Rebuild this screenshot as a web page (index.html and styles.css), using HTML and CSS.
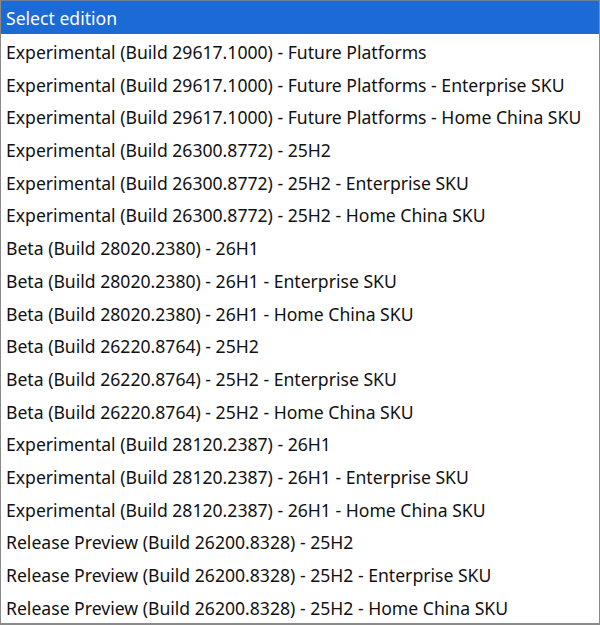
FILE: index.html
```html
<!DOCTYPE html>
<html lang="en">
<head>
    <meta charset="UTF-8">
    <meta name="viewport" content="width=device-width, initial-scale=1.0">
    <title>Select edition</title>
    <link rel="stylesheet" href="styles.css">
</head>
<body>
    <div class="dropdown">
        <div class="option selected">Select edition</div>
        <div class="option">Experimental (Build 29617.1000) - Future Platforms</div>
        <div class="option">Experimental (Build 29617.1000) - Future Platforms - Enterprise SKU</div>
        <div class="option">Experimental (Build 29617.1000) - Future Platforms - Home China SKU</div>
        <div class="option">Experimental (Build 26300.8772) - 25H2</div>
        <div class="option">Experimental (Build 26300.8772) - 25H2 - Enterprise SKU</div>
        <div class="option">Experimental (Build 26300.8772) - 25H2 - Home China SKU</div>
        <div class="option">Beta (Build 28020.2380) - 26H1</div>
        <div class="option">Beta (Build 28020.2380) - 26H1 - Enterprise SKU</div>
        <div class="option">Beta (Build 28020.2380) - 26H1 - Home China SKU</div>
        <div class="option">Beta (Build 26220.8764) - 25H2</div>
        <div class="option">Beta (Build 26220.8764) - 25H2 - Enterprise SKU</div>
        <div class="option">Beta (Build 26220.8764) - 25H2 - Home China SKU</div>
        <div class="option">Experimental (Build 28120.2387) - 26H1</div>
        <div class="option">Experimental (Build 28120.2387) - 26H1 - Enterprise SKU</div>
        <div class="option">Experimental (Build 28120.2387) - 26H1 - Home China SKU</div>
        <div class="option">Release Preview (Build 26200.8328) - 25H2</div>
        <div class="option">Release Preview (Build 26200.8328) - 25H2 - Enterprise SKU</div>
        <div class="option">Release Preview (Build 26200.8328) - 25H2 - Home China SKU</div>
    </div>
</body>
</html>
```

FILE: styles.css
```css
body {
    margin: 0;
    padding: 0;
    background: #ffffff;
    font-family: "Noto Sans", "Open Sans", sans-serif;
    color: #111;
}
.dropdown {
    width: 600px;
    height: 625px;
    box-sizing: border-box;
    border: 1px solid #8a8a8a;
    border-top-color: #6b7f99;
    border-bottom-width: 2px;
    background: #fff;
    overflow: hidden;
}
.option {
    height: 32.7px;
    box-sizing: border-box;
    padding: 4px 5px 0;
    line-height: 28.7px;
    font-size: 17.6px;
    white-space: nowrap;
}
.option.selected {
    height: 33px;
    padding-top: 2px;
    line-height: 31px;
    background: #1b6ad6;
    color: #ffffff;
}
```
